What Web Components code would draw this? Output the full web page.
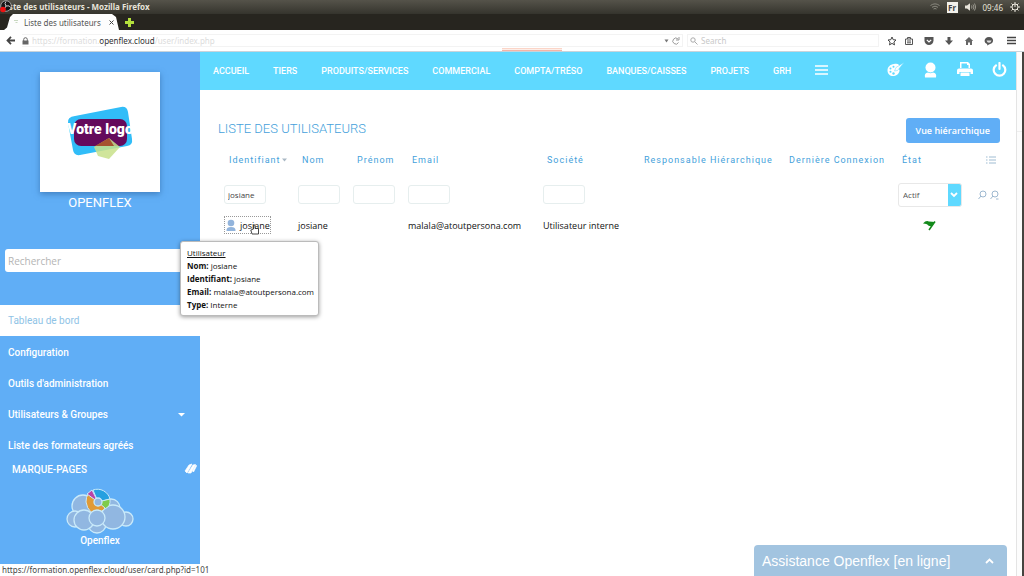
<!DOCTYPE html>
<html lang="fr">
<head>
<meta charset="utf-8">
<title>Liste des utilisateurs</title>
<style>
  html, body { margin: 0; height: 100%; }
  body { font-family: Roboto, "Liberation Sans", sans-serif; font-size: 10px; color: #111; background: #fff; overflow: hidden; }
</style>
</head>
<body>
<app-window>
  <browser-chrome slot="chrome"></browser-chrome>
  <side-bar slot="side"></side-bar>
  <top-nav></top-nav>
  <user-list></user-list>
  <user-tip slot="over"></user-tip>
  <link-status slot="over">https://formation.openflex.cloud/user/card.php?id=101</link-status>
  <help-dock slot="over">Assistance Openflex [en ligne]</help-dock>
</app-window>

<script>
const define = (name, html) => customElements.define(name, class extends HTMLElement {
  constructor() {
    super();
    this.attachShadow({ mode: 'open' }).innerHTML = '<style>*{box-sizing:border-box}a{color:inherit;text-decoration:none}button,input,select{font:inherit;color:inherit;margin:0}svg{display:block;flex:none}</style>' + html;
  }
});

define('app-window', `
<style>
  :host { display: flex; flex-direction: column; min-height: 100vh; position: relative; }
  .body { flex: 1; display: flex; }
  main { flex: 1; min-width: 0; }
  .scroll { width: 6px; border-left: 1px solid #e4e4e4; background: #fcfcfc; }
  .scroll i { display: block; height: 80px; border-bottom: 1px solid #eee; }
  .edge { width: 2px; background: #46433f; }
</style>
<slot name="chrome"></slot>
<div class="body">
  <slot name="side"></slot>
  <main><slot></slot></main>
  <div class="scroll"><i></i></div>
  <div class="edge"></div>
</div>
<slot name="over"></slot>`);

define('browser-chrome', `
<style>
  :host { display: block; position: relative; font-family: "Noto Sans", "Open Sans", sans-serif; font-size: 8px; color: #555; border-bottom: 1px solid #c9d3da; }
  .title { display: flex; align-items: center; height: 14px; padding: 0 4px 0 2px; background: linear-gradient(#55534a, #35342d); color: #e8e4da; }
  .title strong { flex: 1; font: bold 8px/12px "Noto Sans", sans-serif; }
  .rec { position: absolute; left: 0; top: 0; }
  .tray { display: flex; align-items: center; gap: 7px; }
  .tray b { background: #f2f0ea; color: #444; width: 11px; height: 11px; font-size: 8px; line-height: 11px; text-align: center; }
  .tabs { display: flex; align-items: center; gap: 6px; height: 16px; background: #27251f; }
  .tab { display: flex; align-items: center; gap: 5px; width: 115px; height: 16px; margin-left: 4px; padding: 0 5px 0 9px; background: #fdfdfd; clip-path: polygon(0 100%, 3px 85%, 6px 18%, 9px 0, 108px 0, 112px 18%, 115px 100%); }
  .tab span { flex: 1; white-space: nowrap; }
  .tab button, .tabs > button, .bar button { border: 0; padding: 0; background: none; display: flex; }
  .bar { display: flex; align-items: center; height: 21px; padding: 0 8px 0 6px; background: #fff; }
  .url { flex: 1; display: flex; align-items: center; gap: 3px; height: 13px; margin-left: 6px; border: solid #f3f3f3; border-width: 1px 1px 1px 0; padding-right: 2px; }
  .url p { flex: 1; margin: 0; color: #dcdcdc; }
  .url p b { font-weight: 400; color: #333; }
  .find { display: flex; align-items: center; gap: 3px; width: 192px; height: 13px; margin: 0 8px 0 4px; padding-left: 2px; border: 1px solid #f3f3f3; }
  .find input { width: 100%; border: 0; padding: 0; background: none; height: 10px; outline: 0; }
  .find input::placeholder { color: #c8c8c8; opacity: 1; }
  .tools { display: flex; gap: 10px; }
  .load { position: absolute; left: 49%; top: 48px; width: 60px; height: 3px; border-top: 1px solid #fbd5c8; border-bottom: 1px solid #f5b4a6; background: #fdeee8; }
</style>
<div class="title">
  <strong>Liste des utilisateurs - Mozilla Firefox</strong>
  <div class="tray">
    <svg width="10" height="8" viewBox="0 0 10 8" fill="none" stroke="#8b897f"><path d="M.5 2.500Q5-.8 9.500 2.500M2 4.300Q5 2 8 4.300M3.500 6Q5 5 6.500 6"/></svg>
    <b>Fr</b>
    <svg width="11" height="8" viewBox="0 0 11 8"><path d="M0 2.500h2L5 .3v7.400L2 5.500H0z" fill="#e8e4da"/><path d="M6.500 2.500q1 1.500 0 3M8 1.500q2 2.500 0 5M9.500.5q2.500 3.500 0 7" fill="none" stroke="#9c9a90"/></svg>
    <span>09:46</span>
    <svg width="10" height="10" viewBox="0 0 10 10" fill="none" stroke="#e8e4da"><circle cx="5" cy="5" r="3"/><path d="M5 0v5M0 5h2M8 5h2M5 8v2M1.500 1.500 3 3M7 3l1.500-1.500M1.500 8.500 3 7M7 7l1.500 1.500"/></svg>
  </div>
</div>
<svg class="rec" width="13" height="13" viewBox="0 0 13 13"><circle cx="6" cy="6" r="5.300" fill="#161616" stroke="#bbb" stroke-width=".8"/><path d="M6 6Q4 3 6 1.500M6 6q4-1 4.500 1.500M6 6q-1 3-3 3" fill="none" stroke="#ccc"/><circle cx="3" cy="9.500" r="2.800" fill="#e11"/></svg>
<div class="tabs">
  <div class="tab">
    <svg width="6" height="6" viewBox="0 0 6 6"><path d="M1 1.500h4M2.500 3.500h2" stroke="#c8d8c0"/></svg>
    <span>Liste des utilisateurs</span>
    <button aria-label="Fermer"><svg width="5" height="5" viewBox="0 0 5 5"><path d="M.5.5l4 4m0-4-4 4" stroke="#444"/></svg></button>
  </div>
  <button aria-label="Nouvel onglet"><svg width="9" height="9" viewBox="0 0 9 9"><path d="M3 0h3v3h3v3H6v3H3V6H0V3h3z" fill="#b4e03c"/></svg></button>
</div>
<div class="bar">
  <button aria-label="Retour"><svg width="10" height="9" viewBox="0 0 10 9" fill="none" stroke="#444" stroke-width="1.800"><path d="M5 .8 1.500 4.500 5 8.200M1.500 4.500H9"/></svg></button>
  <div class="url">
    <svg width="7" height="8" viewBox="0 0 7 8"><path d="M.5 3.500h6V7.500h-6z" fill="#666"/><path d="M1.700 4V2.500q0-1.800 1.800-1.800t1.800 1.800V4" fill="none" stroke="#666"/></svg>
    <p>https://formation.<b>openflex.cloud</b>/user/index.php</p>
    <svg width="5" height="4" viewBox="0 0 5 4"><path d="M.5.5h4l-2 3z" fill="#777"/></svg>
    <button aria-label="Actualiser"><svg width="8" height="8" viewBox="0 0 8 8" fill="none" stroke="#999"><path d="M6.500 5.500A3 3 0 1 1 6 2M7 0v3H4"/></svg></button>
  </div>
  <label class="find"><svg width="8" height="8" viewBox="0 0 8 8" fill="none" stroke="#aaa"><circle cx="3" cy="3" r="2.200"/><path d="M4.700 4.700 7.500 7.500"/></svg><input placeholder="Search" aria-label="Search"></label>
  <div class="tools">
    <button aria-label="Favori"><svg width="10" height="10" viewBox="0 0 10 10"><path d="M5 1l1.200 2.700 2.800.3-2.100 2 .6 2.900L5 7.400 2.500 8.900l.6-2.900L1 4l2.800-.3z" fill="none" stroke="#444"/></svg></button>
    <button aria-label="Marque-pages" style="margin-left:-3px"><svg width="10" height="10" viewBox="0 0 10 10"><path d="M1.500 3h7v5.500h-7zM3.500 3V1.500h3V3M3 5h4M3 6.800h4" fill="none" stroke="#555"/></svg></button>
    <button aria-label="Pocket"><svg width="10" height="10" viewBox="0 0 10 10"><path d="M.5 1h9v3.500a4.500 4.500 0 0 1-9 0z" fill="#555"/><path d="M2.800 3.800 5 6l2.200-2.200" fill="none" stroke="#fff" stroke-width="1.200"/></svg></button>
    <button aria-label="Téléchargements"><svg width="10" height="10" viewBox="0 0 10 10"><path d="M3.500 1h3v3.500H9L5 9 1 4.500h2.500z" fill="#555"/></svg></button>
    <button aria-label="Accueil"><svg width="10" height="10" viewBox="0 0 10 10"><path d="M5 1 .8 5H2v4h2V6.500h2V9h2V5h1.200z" fill="#666"/></svg></button>
    <button aria-label="Discussion"><svg width="10" height="10" viewBox="0 0 10 10"><path d="M5 1c5 0 5.500 6 1 7L3 9.500 3.300 8C-1 7 0 1 5 1z" fill="#555"/><path d="M2.500 4.500h5Q7 6.800 5 6.800T2.500 4.500" fill="#ddd"/></svg></button>
    <button aria-label="Menu" style="margin-left:3px"><svg width="9" height="9" viewBox="0 0 9 9"><path d="M0 1.500h9M0 4.500h9M0 7.500h9" stroke="#444" stroke-width="1.400"/></svg></button>
  </div>
</div>
<div class="load"></div>`);

define('side-bar', `
<style>
  :host { display: flex; flex-direction: column; width: 200px; background: #60aef6; color: #fff; }
  .logo { width: 120px; height: 120px; margin: 20px auto 0; background: #fff; box-shadow: 0 2px 6px #2b5f9a99; display: flex; align-items: center; justify-content: center; }
  h2 { margin: 3px 0 0; font-size: 13px; line-height: 16px; font-weight: 400; text-align: center; }
  .search { display: block; width: 190px; height: 23px; margin: 38px 5px 33px; padding: 0 3px; border: 0; border-radius: 3px; background: #fff; font: 10px "Open Sans", sans-serif; outline: 0; }
  .search::placeholder { color: #b4b4b4; opacity: 1; }
  nav a { display: flex; align-items: center; justify-content: space-between; height: 31px; padding: 0 15px 0 8px; font-weight: 500; }
  nav a.on { margin-bottom: 1px; background: #fff; color: #8fc3e6; font-weight: 400; }
  .marks { display: flex; align-items: center; justify-content: space-between; height: 16px; padding: 0 3px 0 12px; }
  h3 { margin: 0; font-size: 10px; font-weight: 500; }
  .brand { display: flex; flex-direction: column; align-items: center; gap: 1px; margin-top: 11px; line-height: 12px; font-weight: 500; }
</style>
<div class="logo"><svg width="70" height="54" viewBox="0 0 70 54">
  <path d="M10 11 56 2q6-1 7 5l4 27q1 6-5 7L15 50q-6 1-7-5L3 18q-1-6 7-7z" fill="#31bdf8"/>
  <rect x="9" y="14" width="53" height="27" rx="7" fill="#640a5c"/>
  <path d="m29 42 15-9 11 9-11 12-11-3z" fill="#c8e08a" opacity=".85"/><path d="m30 41 14-8 5 8z" fill="#a5522f"/>
  <text x="35" y="29" text-anchor="middle" font-family="Roboto, sans-serif" font-weight="900" font-size="14" fill="#fff">Votre logo</text>
</svg></div>
<h2>OPENFLEX</h2>
<input class="search" placeholder="Rechercher" aria-label="Rechercher">
<nav>
  <a class="on" href="#">Tableau de bord</a>
  <a href="#">Configuration</a>
  <a href="#">Outils d'administration</a>
  <a href="#">Utilisateurs &amp; Groupes <svg width="7" height="4" viewBox="0 0 7 4"><path d="M0 0h7L3.500 3.500z" fill="#fff"/></svg></a>
  <a href="#">Liste des formateurs agréés</a>
</nav>
<div class="marks"><h3>MARQUE-PAGES</h3><svg width="13" height="12" viewBox="0 0 13 12"><path d="M1 8 5 2l3-1-5 9zM4 10l5-8 2.500-.5L7 10zM8.500 8l3.500-6 .5 1-3 6z" fill="#fff" stroke="#fff" stroke-width=".7"/></svg></div>
<div class="brand">
  <svg width="68" height="46" viewBox="0 0 68 46" fill="#91b7e1" stroke="#c9eafa" stroke-width="1.300">
    <circle cx="17" cy="18" r="11"/><circle cx="45" cy="20" r="9"/><circle cx="9" cy="31" r="8"/><circle cx="60" cy="31" r="7"/><circle cx="31" cy="36" r="9"/>
    <circle cx="18" cy="32" r="10"/><circle cx="47" cy="29" r="12"/>
    <g stroke="#c9eafa" stroke-width="1"><path d="M32 14 27 2a13 13 0 0 1 17 9z" fill="#26a0e0"/><path d="M32 14 44 11a13 13 0 0 1-1 7l-4 3z" fill="#7fcb4b"/><path d="M32 14 39 20q-3 5-7 2l3 5q-13 0-15-13 0-5 2-8z" fill="#e09a36"/><path d="M32 14 21 6l5-4z" fill="#b843a8"/></g>
    <circle cx="32" cy="14" r="4"/><circle cx="31" cy="30" r="8"/>
  </svg>
  Openflex
</div>`);

define('top-nav', `
<style>
  :host { display: flex; align-items: center; justify-content: space-between; height: 38px; padding: 0 9px 0 13px; background: #5fd9ff; color: #fff; }
  nav { display: flex; align-items: center; gap: 24px; white-space: nowrap; font-size: 9px; font-weight: 500; }
  .acts { display: flex; align-items: center; gap: 19px; padding-bottom: 3px; }
  a { display: flex; }
  a.more { padding-bottom: 3px; }
</style>
<nav>
  <a href="#">ACCUEIL</a><a href="#">TIERS</a><a href="#">PRODUITS/SERVICES</a><a href="#">COMMERCIAL</a><a href="#">COMPTA/TRÉSO</a><a href="#">BANQUES/CAISSES</a><a href="#">PROJETS</a><a href="#">GRH</a>
  <a href="#" class="more" aria-label="Plus"><svg width="13" height="10" viewBox="0 0 13 10"><path d="M0 1h13M0 5h13M0 9h13" stroke="#fff" stroke-width="1.500"/></svg></a>
</nav>
<div class="acts">
  <a href="#" aria-label="Thème"><svg width="17" height="15" viewBox="0 0 17 15"><path d="M7 2c4-1 6 1 5 2.500C10 7 13 7 12.500 9 12 12 9 14 6 14s-5.500-2-5.500-5.500S3 2.500 7 2z" fill="#fff"/><path d="M17 .5 10.500 8.500 7.500 9 9 5.500z" fill="#fff" stroke="#5fd9ff" stroke-width=".5"/><g fill="#5fd9ff"><circle cx="3.500" cy="6.500" r="1"/><circle cx="6.500" cy="4.800" r="1"/><circle cx="3.500" cy="9.800" r="1"/><circle cx="6.500" cy="11.500" r="1.200"/></g></svg></a>
  <a href="#" aria-label="Utilisateur"><svg width="15" height="16" viewBox="0 0 15 16" fill="#fff"><circle cx="7.500" cy="5.500" r="5"/><path d="M2 15.500q-1-4.500 3-5 2.500 1.500 5 0 4 .5 3 5z"/></svg></a>
  <a href="#" aria-label="Imprimer"><svg width="16" height="15" viewBox="0 0 16 15" fill="#fff"><path d="M3 0h8l2 2v4h-1.500V3H10V1.500H4.500V6H3zM2 6.500h12q2 0 2 2V12h-2.500v-2h-11v2H0V8.500q0-2 2-2z"/><path d="M3.500 10.500h9V14h-9z"/></svg></a>
  <a href="#" aria-label="Déconnexion"><svg width="15" height="15" viewBox="0 0 15 15" fill="none" stroke="#fff" stroke-width="2.200" stroke-linecap="round"><path d="M4 3.300a5.800 5.800 0 1 0 7 0M7.500 1v6"/></svg></a>
</div>`);

define('user-list', `
<style>
  :host { display: block; padding: 27px 16px 0 18px; }
  header { display: flex; justify-content: space-between; align-items: center; height: 26px; }
  h1 { margin: 0 0 2px; font-size: 13px; line-height: 16px; font-weight: 300; color: #459fdb; }
  header button { height: 25px; padding: 0 10px; border: 0; border-radius: 3px; background: #60aef6; color: #fff; font: 600 9px "Open Sans", sans-serif; }
  table { width: 100%; border-collapse: collapse; table-layout: fixed; font: 9px "Open Sans", sans-serif; }
  th, td { padding: 0; text-align: left; white-space: nowrap; }
  th { height: 34px; padding-left: 4px; font: 400 9px Roboto, sans-serif; color: #459fdb; letter-spacing: 1px; }
  td:first-child { padding-left: 6px; }
  th:first-child { padding-left: 11px; }
  th button { border: 0; padding: 0; background: none; letter-spacing: inherit; display: flex; align-items: center; gap: 1px; }
  .filters td { height: 35px; }
  input { display: block; width: 42px; height: 19px; padding: 0 3px; border: 1px solid #e6eeee; border-radius: 3px; font-size: 8px; color: #444; background: #fff; }
  .pick { position: relative; display: block; width: 64px; }
  select { appearance: none; display: block; width: 64px; height: 24px; padding: 0 4px; border: 1px solid #e8e8e8; border-radius: 3px; background: linear-gradient(#5fd9ff, #5fd9ff) right / 14px 100% no-repeat border-box #fff; font-size: 8px; color: #555; }
  .pick svg { position: absolute; right: 4px; top: 9px; pointer-events: none; }
  .data td { height: 26px; }
  .data a { display: inline-flex; align-items: center; gap: 4px; height: 18px; border: 1px dotted #999; padding-left: 1px; position: relative; vertical-align: middle; }
  .data .hand { position: absolute; left: 25px; top: 7px; }
  .flag { margin-left: 25px; }
  .list { margin-left: 6px; }
  .r { display: flex; gap: 3px; padding-left: 2px; }
</style>
<header><h1>LISTE DES UTILISATEURS</h1><button>Vue hiérarchique</button></header>
<table>
  <colgroup><col style="width:80px"><col style="width:55px"><col style="width:55px"><col style="width:135px"><col style="width:97px"><col style="width:145px"><col><col style="width:78px"><col style="width:24px"></colgroup>
  <thead>
    <tr><th scope="col"><button>Identifiant<svg width="5" height="4" viewBox="0 0 5 4"><path d="M0 .5h5l-2.500 3z" fill="#a9b8c4"/></svg></button></th><th scope="col">Nom</th><th scope="col">Prénom</th><th scope="col">Email</th><th scope="col">Société</th><th scope="col">Responsable Hiérarchique</th><th scope="col">Dernière Connexion</th><th scope="col">État</th><th scope="col" aria-label="Colonnes"><svg class="list" width="10" height="8" viewBox="0 0 10 8"><path d="M0 1h1.500M3 1h7M0 4h1.500M3 4h7M0 7h1.500M3 7h7" stroke="#9fbcd2"/></svg></th></tr>
  </thead>
  <tbody>
    <tr class="filters"><td><input value="josiane" aria-label="Identifiant"></td><td><input aria-label="Nom"></td><td><input aria-label="Prénom"></td><td><input aria-label="Email"></td><td><input aria-label="Société"></td><td></td><td></td>
      <td><label class="pick"><select aria-label="État"><option>Actif</option></select><svg width="8" height="6" viewBox="0 0 8 6"><path d="m1 1 3 3 3-3" fill="none" stroke="#fff" stroke-width="1.800"/></svg></label></td>
      <td><div class="r"><svg width="9" height="10" viewBox="0 0 9 10" fill="none" stroke="#9db8d0"><circle cx="5" cy="4" r="3"/><path d="M3 6 .5 9"/></svg><svg width="9" height="10" viewBox="0 0 9 10" fill="none" stroke="#9db8d0"><circle cx="5" cy="4" r="3"/><path d="M3 6 .5 9M6 9h2.500"/></svg></div></td></tr>
    <tr class="data"><td><a href="#"><svg width="10" height="13" viewBox="0 0 10 13" fill="#92b4dc"><circle cx="5" cy="4" r="3.300"/><path d="M.5 12Q0 8 5 8t4.500 4z"/></svg>josiane<svg class="hand" width="10" height="11" viewBox="0 0 10 11"><path d="M3.500 5V1h1.500v3.500h3.500V10H2L.8 6z" fill="#fff" stroke="#333" stroke-width=".9"/></svg></a></td><td>josiane</td><td></td><td>malala@atoutpersona.com</td><td>Utilisateur interne</td><td></td><td></td>
      <td><svg class="flag" role="img" aria-label="Actif" width="13" height="11" viewBox="0 0 13 11"><path d="M0 3.500Q3 0 6 1.500L12 2 8.500 6.500Q5 6 4 4.200 2 3.500 0 3.500z" fill="#138a1b"/><path d="M12 1.500 6 10" stroke="#138a1b" stroke-width="1.500"/></svg></td><td></td></tr>
  </tbody>
</table>`);

define('user-tip', `
<style>
  :host { position: absolute; left: 180px; top: 241px; padding: 4px 6px; border: 1px solid #bbb; border-radius: 3px; background: #fff; box-shadow: 0 1px 4px #0006; font: 8px/13px "Open Sans", sans-serif; width: 139px; box-sizing: border-box; white-space: nowrap; }
  p { margin: 0; }
</style>
<p><u>Utilisateur</u></p>
<p><b>Nom:</b> josiane</p>
<p><b>Identifiant:</b> josiane</p>
<p><b>Email:</b> malala@atoutpersona.com</p>
<p><b>Type:</b> Interne</p>`);

define('link-status', `
<style>
  :host { position: absolute; left: 0; bottom: 0; height: 12px; padding: 0 2px; background: #fff; color: #444; font: 8px/12px "Noto Sans", sans-serif; min-width: 200px; white-space: nowrap; }
</style><slot></slot>`);

define('help-dock', `
<style>
  :host { position: absolute; right: 17px; bottom: 0; width: 253px; }
  button { display: flex; align-items: center; justify-content: space-between; width: 100%; height: 31px; padding: 0 13px 0 8px; border: 0; border-radius: 4px 4px 0 0; background: #a2c4e0; color: #fff; font: 14px "Liberation Sans", sans-serif; }
</style>
<button><span><slot></slot></span><svg width="9" height="6" viewBox="0 0 9 6"><path d="m1 5 3.500-3.500L8 5" fill="none" stroke="#fff" stroke-width="1.800"/></svg></button>`);
</script>
</body>
</html>
